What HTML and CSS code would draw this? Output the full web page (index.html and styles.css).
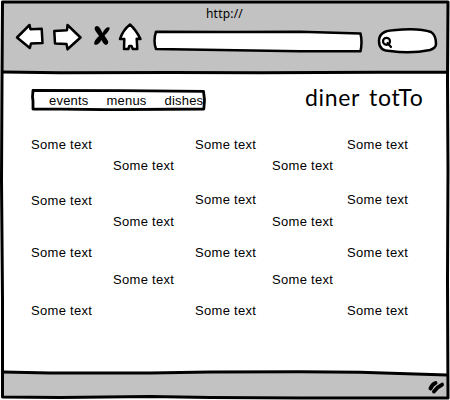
FILE: index.html
```html
<!DOCTYPE html>
<html lang="en">
<head>
<meta charset="utf-8">
<title>diner totTo</title>
<link rel="stylesheet" href="styles.css">
</head>
<body>
<div class="browser">
  <svg class="frame" viewBox="0 0 450 400" aria-hidden="true">
    <path class="chrome" d="M3 2H447V72L300 72.5 140 72.5 3 72Z"/>
    <path class="chrome" d="M3 372L50 373 150 373 210 372 300 371.7 360 372.2 447 375V398L300 398 210 397.5 150 396.5 60 397.5 3 397Z"/>
    <path class="edge" d="M2.5 2H448L447.5 80 448 170 447.5 280 448 398 300 398 210 397.5 150 396.5 60 397.5 2.5 397 2.5 300 1.5 180 2 80Z"/>
    <path class="edge" d="M3 72L60 72.8 170 72.5 260 72.7 380 72.3 447 72.3M3 372L50 373 150 373 210 372 300 371.7 360 372.2 447 375"/>
  </svg>
  <header class="toolbar">
    <div class="url">http://</div>
    <div class="controls">
      <svg class="back" width="30" height="28" viewBox="15 23 30 28"><path class="ink" d="M17 37.5L29.5 25 30.5 29.2 41.7 28.8 42.5 43 31 43.5 29.8 48Z"/></svg>
      <svg class="forward" width="30" height="28" viewBox="52 23 30 28"><path class="ink" d="M54.3 31L67 30.2 67.5 25 80.5 37.5 67.5 49.3 66.5 44 55 43.5Z"/></svg>
      <svg class="stop" width="18" height="22" viewBox="93 25 18 22"><path d="M95 27Q98 24.5 100.5 29L102.5 33Q106 26 109.5 27.5 110.5 30 104.5 35.5L108 41Q109 44 106 45 103.5 44.5 101.5 40Q98 46 94.5 44.5 93 41.5 99 36L95.5 31Q94 28.5 95 27Z"/></svg>
      <svg class="home" width="25" height="29" viewBox="118 22 25 29"><path class="ink" d="M130 24.5Q136 30 140.5 39L136.7 38.8 137.3 49 132.8 49 131.5 46 129.3 46 128.3 49H124L124.3 39 120 39Q123 30 130 24.5Z"/></svg>
      <svg class="address" width="212" height="26" viewBox="152 28 212 26"><path class="ink" d="M156 31.7L230 32 300 31.7 360.5 33.5Q362.5 42 360.5 51.3L300 51.3 156 49Q153 41 156 31.7Z"/></svg>
      <svg class="search" width="62" height="28" viewBox="376 27 62 28"><path class="ink" d="M379 41Q379 31 393 30.2 419 27.5 431 32 436 35 436 44 436 48 430 50 411 54 390 51 379 51 379 41Z"/><circle class="lens" cx="386.5" cy="41.3" r="3.5"/><path class="lens" d="M387.5 43L391 47"/></svg>
    </div>
  </header>
  <main>
    <div class="masthead">
      <nav>
        <svg class="nav-box" viewBox="0 0 175 22" aria-hidden="true"><path d="M2 1.4L90 1.6 172.5 2.4 173.5 11 172.8 20 80 20.7 30 20.2 2 20 2 12 1.5 8Z"/></svg>
        <span>events</span><span>menus</span><span>dishes</span>
      </nav>
      <h1>diner totTo</h1>
    </div>
    <div class="menu">
      <p>Some text</p><p class="c3">Some text</p><p class="c5">Some text</p>
      <p class="c2">Some text</p><p class="c4">Some text</p>
      <p class="low">Some text</p><p class="c3">Some text</p><p class="c5">Some text</p>
      <p class="c2">Some text</p><p class="c4">Some text</p>
      <p>Some text</p><p class="c3">Some text</p><p class="c5">Some text</p>
      <p class="c2">Some text</p><p class="c4">Some text</p>
      <p>Some text</p><p class="c3">Some text</p><p class="c5">Some text</p>
    </div>
  </main>
  <footer>
    <svg width="18" height="16" viewBox="427 379 18 16"><path class="grip" d="M430.5 388.5Q432 384.5 435.5 383M434 391.5Q437 387 442 384.7"/></svg>
  </footer>
</div>
</body>
</html>
```
FILE: styles.css
```css
* { box-sizing: border-box; margin: 0; padding: 0; }
body { background: #fff; color: #000; font: 13px/16px "Liberation Sans", sans-serif; overflow: hidden; }
.browser { position: relative; isolation: isolate; width: 450px; height: 400px; display: flex; flex-direction: column; }
svg { display: block; flex: none; }
.frame { position: absolute; z-index: -1; width: 450px; height: 400px; }
.chrome { fill: #c2c2c2; }
.edge { fill: none; stroke: #000; stroke-width: 3; stroke-linejoin: round; }
.ink { fill: #fff; stroke: #000; stroke-width: 2.5; stroke-linejoin: round; }
.lens { fill: none; stroke: #000; stroke-width: 2.2; stroke-linecap: round; }
.grip { fill: none; stroke: #000; stroke-width: 4; stroke-linecap: round; }
.toolbar { height: 73px; padding-top: 6px; }
.url { height: 16px; padding-left: 206px; font: 12px/16px "Noto Sans", sans-serif; letter-spacing: .2px; }
.controls { display: flex; align-items: flex-start; padding-left: 15px; }
.back { margin: 1px 7px 0 0; }
.forward { margin: 1px 11px 0 0; }
.stop { margin: 3px 7px 0 0; }
.home { margin-right: 9px; }
.address { margin: 6px 12px 0 0; }
.search { margin-top: 5px; }
main { flex: 1; padding: 15px 0 0 31px; }
.masthead { display: flex; height: 49px; }
nav { position: relative; display: flex; gap: 18px; width: 175px; height: 22px; margin-top: 1px; padding-left: 18px; line-height: 23px; letter-spacing: .2px; }
.nav-box { position: absolute; inset: 0; width: 175px; height: 22px; z-index: -1; }
.nav-box path { fill: #fff; stroke: #000; stroke-width: 2.8; stroke-linejoin: round; }
h1 { margin: -2px 0 0 99px; font: 400 23px/22px Lato, sans-serif; letter-spacing: .65px; word-spacing: 3px; font-variant-ligatures: none; white-space: nowrap; }
.menu { display: grid; grid-template-columns: 82px 82px 77px 75px 70px; grid-template-rows: 21px 34px 22px 31px 27px 31px 16px; }
.menu p { white-space: nowrap; letter-spacing: .3px; grid-column: 1; }
.menu .c2 { grid-column: 2; }
.menu .c3 { grid-column: 3; }
.menu .c4 { grid-column: 4; }
.menu .c5 { grid-column: 5; }
.menu .low { padding-top: 1px; }
footer { display: flex; justify-content: flex-end; height: 28px; padding: 7px 5px 0 0; }
```
